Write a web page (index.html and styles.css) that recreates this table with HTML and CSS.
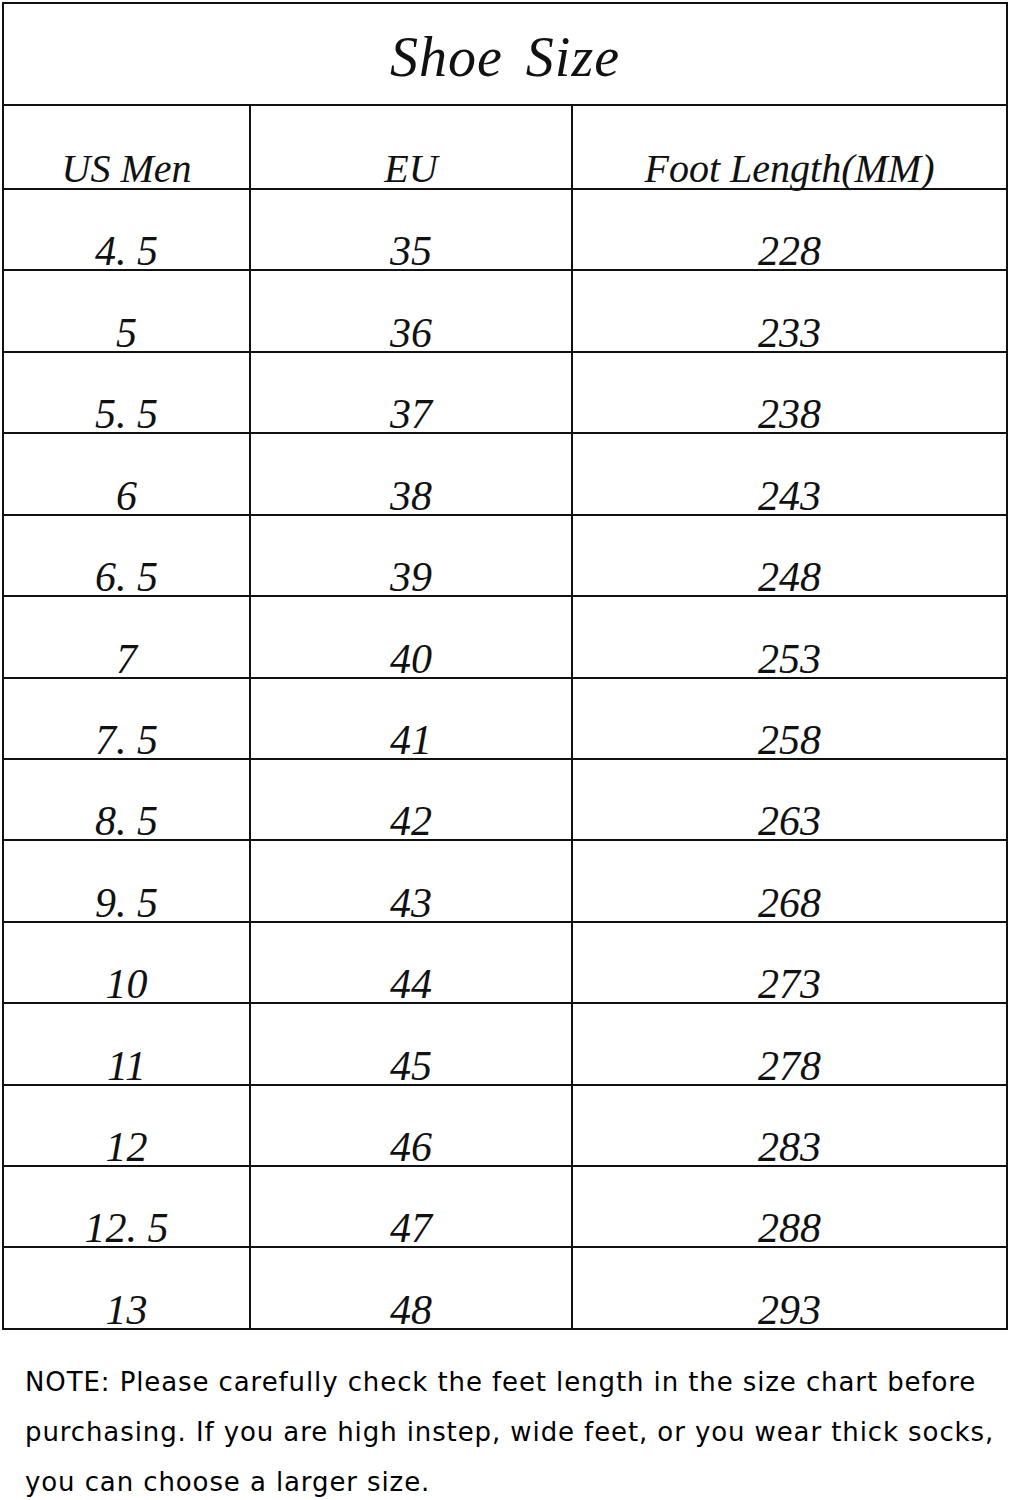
FILE: index.html
```html
<!DOCTYPE html>
<html lang="en">
<head>
<meta charset="utf-8">
<title>Shoe Size</title>
<link rel="stylesheet" href="styles.css">
</head>
<body>
<div class="chart">
  <div class="cell title">Shoe Size</div>
  <div class="cell head">US Men</div>
  <div class="cell head">EU</div>
  <div class="cell head">Foot Length(MM)</div>

  <div class="cell">4. 5</div><div class="cell">35</div><div class="cell">228</div>
  <div class="cell">5</div><div class="cell">36</div><div class="cell">233</div>
  <div class="cell">5. 5</div><div class="cell">37</div><div class="cell">238</div>
  <div class="cell">6</div><div class="cell">38</div><div class="cell">243</div>
  <div class="cell">6. 5</div><div class="cell">39</div><div class="cell">248</div>
  <div class="cell">7</div><div class="cell">40</div><div class="cell">253</div>
  <div class="cell">7. 5</div><div class="cell">41</div><div class="cell">258</div>
  <div class="cell">8. 5</div><div class="cell">42</div><div class="cell">263</div>
  <div class="cell">9. 5</div><div class="cell">43</div><div class="cell">268</div>
  <div class="cell">10</div><div class="cell">44</div><div class="cell">273</div>
  <div class="cell">11</div><div class="cell">45</div><div class="cell">278</div>
  <div class="cell">12</div><div class="cell">46</div><div class="cell">283</div>
  <div class="cell">12. 5</div><div class="cell">47</div><div class="cell">288</div>
  <div class="cell">13</div><div class="cell">48</div><div class="cell">293</div>
</div>
<p class="note">NOTE: Please carefully check the feet length in the size chart before<br>purchasing. If you are high instep, wide feet, or you wear thick socks,<br>you can choose a larger size.</p>
</body>
</html>
```
FILE: styles.css
```css
html, body {
  margin: 0;
  padding: 0;
  background: #fff;
  color: #111;
}

.chart {
  display: grid;
  grid-template-columns: 247px 322px 435px;
  grid-template-rows: 102px 84px repeat(14, 81.43px);
  width: fit-content;
  margin: 2px 0 0 2px;
  border-top: 2px solid #111;
  border-left: 2px solid #111;
  font-family: "Liberation Serif", "Times New Roman", serif;
  font-style: italic;
}

.cell {
  box-sizing: border-box;
  border-right: 2px solid #111;
  border-bottom: 2px solid #111;
  display: flex;
  flex-direction: column;
  justify-content: flex-end;
  align-items: center;
  font-size: 42px;
  line-height: 30px;
  padding-bottom: 3px;
  white-space: pre;
}

.cell.head {
  font-size: 40px;
  padding-bottom: 4px;
}

.cell.title {
  grid-column: 1 / -1;
  justify-content: center;
  font-size: 56px;
  line-height: normal;
  padding: 6px 0 0 0;
  letter-spacing: 1px;
  word-spacing: 8px;
}

.note {
  margin: 27px 0 0 25px;
  font-family: "DejaVu Sans", "Liberation Sans", sans-serif;
  font-size: 26px;
  line-height: 50px;
  letter-spacing: 0.9px;
  color: #000;
  white-space: nowrap;
}
```
